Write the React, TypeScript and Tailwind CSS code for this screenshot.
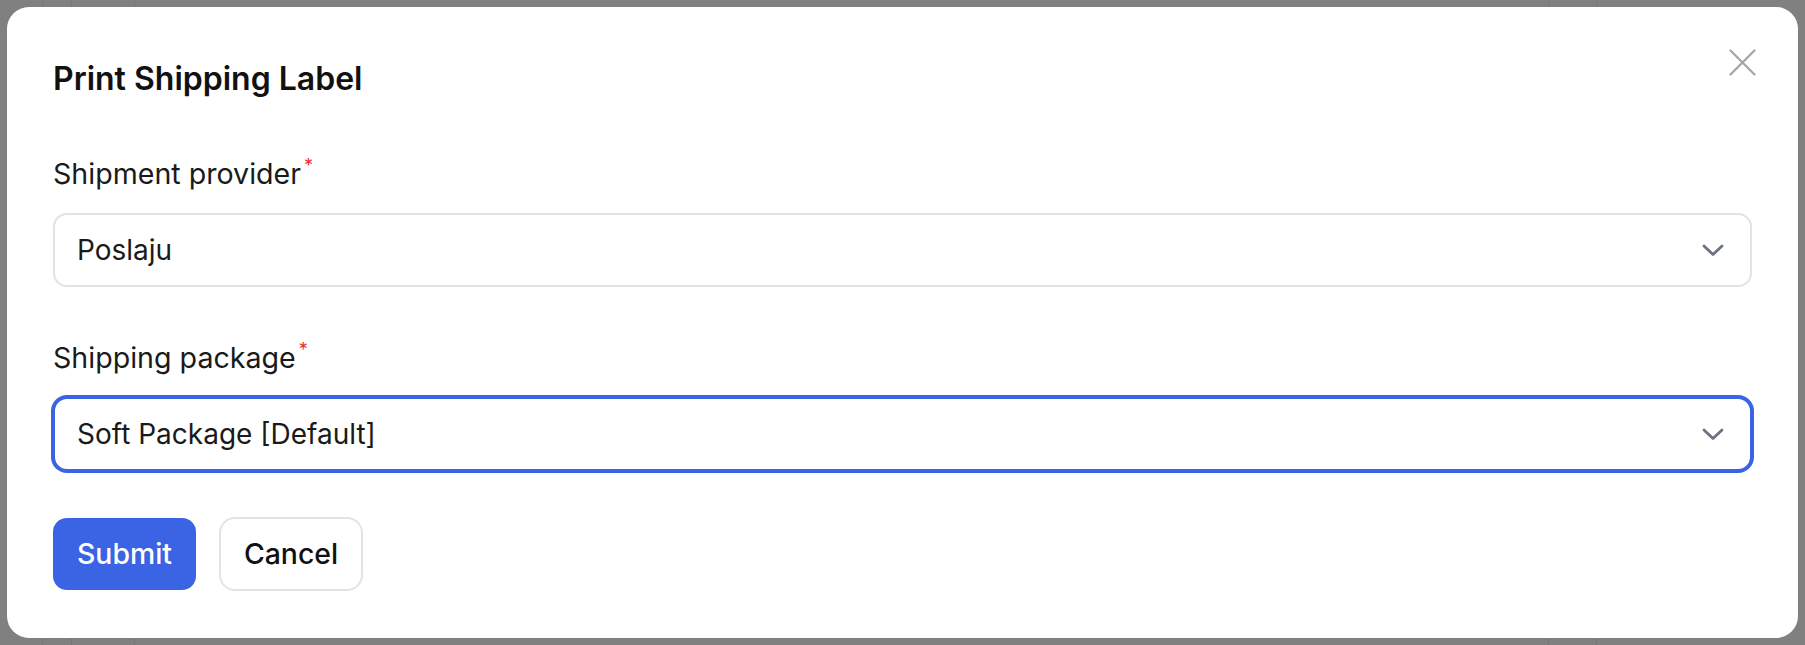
function Chevron() {
    return (
        <svg width="22" height="14" viewBox="0 0 22 14" fill="none">
            <path d="M2 3 L11 11.5 L20 3" stroke="#6b7280" strokeWidth="2.8" strokeLinecap="round" strokeLinejoin="round" />
        </svg>
    );
}

interface SelectFieldProps {
    label: string;
    value: string;
    focused?: boolean;
}

function SelectField({ label, value, focused }: SelectFieldProps) {
    return (
        <div>
            <div className="text-[28.6px] leading-[40px] text-[#1a1a1a]">
                {label}
                <sup className="ml-[3px] text-[18px] text-[#e0322f] top-[-0.65em]">*</sup>
            </div>
            <div
                className={
                    focused
                        ? "mt-[19px] flex h-[74px] items-center justify-between rounded-[14px] border-2 border-[#3a64e3] bg-white pl-[22px] pr-[26px] shadow-[0_0_0_2px_#3a64e3]"
                        : "mt-[19px] flex h-[74px] items-center justify-between rounded-[14px] border-2 border-[#e3e3e3] bg-white pl-[22px] pr-[26px]"
                }
            >
                <span className="text-[28px] leading-[40px] text-[#1a1a1a]">{value}</span>
                <Chevron />
            </div>
        </div>
    );
}

export default function App() {
    return (
        <div className="relative h-[645px] w-[1805px] overflow-hidden bg-[#808080] font-[Inter,sans-serif]">
            {/* dimmed page behind the modal */}
            <div className="flex h-full">
                <div className="w-[43px] border-r border-[#777777]" />
                <div className="w-[29px] border-r border-[#777777]" />
                <div className="w-[63px] border-r border-[#777777]" />
                <div className="flex-1" />
                <div className="w-[48px] border-l border-[#777777]" />
                <div className="w-[209px] border-l border-[#777777]" />
            </div>

            {/* modal */}
            <div className="absolute inset-[7px] rounded-[22px] bg-white px-[46px] pt-[52px]">
                <button className="absolute right-[42px] top-[42px] h-[27px] w-[27px]">
                    <svg width="27" height="27" viewBox="0 0 27 27" fill="none">
                        <path d="M1.5 1.5 L25.5 25.5 M25.5 1.5 L1.5 25.5" stroke="#a3a3a8" strokeWidth="2.2" strokeLinecap="round" />
                    </svg>
                </button>

                <h2 className="text-[32px] font-semibold leading-[40px] text-[#111111]">Print Shipping Label</h2>

                <div className="mt-[55px]">
                    <SelectField label="Shipment provider" value="Poslaju" />
                </div>
                <div className="mt-[51px]">
                    <SelectField label="Shipping package" value="Soft Package [Default]" focused />
                </div>

                {/* actions */}
                <div className="mt-[46px] flex items-center gap-[23px]">
                    <button className="h-[72px] w-[143px] rounded-[14px] bg-[#3a64e3] text-[28.4px] font-medium text-white">
                        Submit
                    </button>
                    <button className="h-[74px] w-[144px] rounded-[16px] border-2 border-[#e3e3e3] bg-white text-[28.4px] font-medium text-[#111111]">
                        Cancel
                    </button>
                </div>
            </div>
        </div>
    );
}
